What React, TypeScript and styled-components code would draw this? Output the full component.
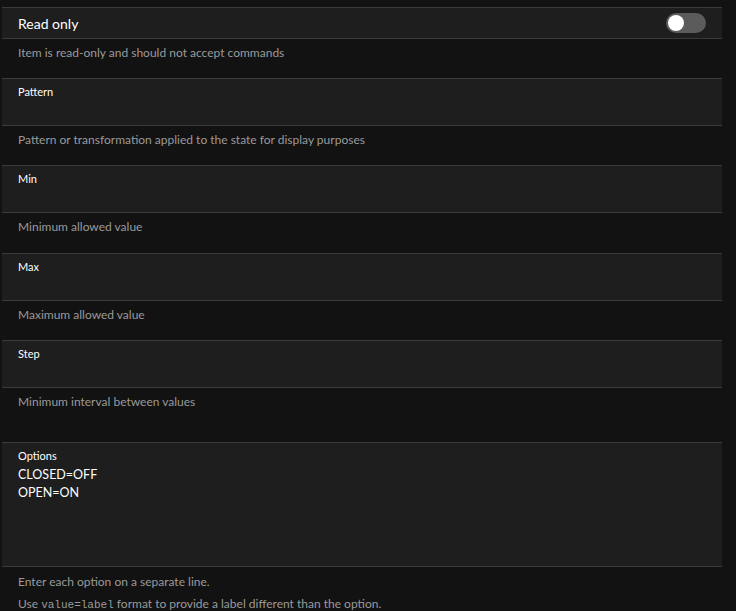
import { FC, useState } from 'react';
import styled, { createGlobalStyle } from 'styled-components';

const GlobalStyle = createGlobalStyle`
  html, body {
    margin: 0;
    padding: 0;
    background: #121212;
  }
  body {
    font-family: Lato, 'Open Sans', sans-serif;
    color: #ffffff;
  }
`;

interface IField {
  label: string;
  description: string;
  gap?: number;
}

const fields: IField[] = [
  { label: 'Pattern', description: 'Pattern or transformation applied to the state for display purposes' },
  { label: 'Min', description: 'Minimum allowed value', gap: 1 },
  { label: 'Max', description: 'Maximum allowed value' },
  { label: 'Step', description: 'Minimum interval between values', gap: 15 },
];

const App: FC = () => {
  const [readOnly, setReadOnly] = useState(false);

  return (
    <>
      <GlobalStyle />
      <Page>
        <Panel>
          <ToggleRow>
            <RowTitle>Read only</RowTitle>
            <Switch type="button" $on={readOnly} onClick={() => setReadOnly((v) => !v)}>
              <Knob $on={readOnly} />
            </Switch>
          </ToggleRow>
          <Hint>Item is read-only and should not accept commands</Hint>

          {fields.map((f) => (
            <div key={f.label}>
              <InputBlock>
                <FieldLabel>{f.label}</FieldLabel>
                <TextInput />
              </InputBlock>
              <Hint $extra={f.gap}>{f.description}</Hint>
            </div>
          ))}

          <InputBlock $tall>
            <FieldLabel>Options</FieldLabel>
            <OptionsArea defaultValue={'CLOSED=OFF\nOPEN=ON'} />
          </InputBlock>
          <HintList>
            <li>Enter each option on a separate line.</li>
            <li>
              Use <Code>value=label</Code> format to provide a label different than the option.
            </li>
          </HintList>
        </Panel>
      </Page>
    </>
  );
};

export default App;

const Page = styled.div`
  padding: 7px 14px 0 2px;
  height: 611px;
  box-sizing: border-box;
  overflow: hidden;
`;

const Panel = styled.div`
  display: flex;
  flex-direction: column;
  width: 720px;
`;

const ToggleRow = styled.div`
  display: flex;
  align-items: center;
  justify-content: space-between;
  height: 30px;
  padding: 0 16px;
  background: #1e1e1e;
  border-top: 1px solid #3a3a3a;
  border-bottom: 1px solid #3a3a3a;
`;

const RowTitle = styled.span`
  font-size: 14px;
  color: #ffffff;
`;

const Switch = styled.button<{ $on: boolean }>`
  position: relative;
  width: 40px;
  height: 20px;
  padding: 0;
  border: none;
  border-radius: 10px;
  background: ${(p) => (p.$on ? '#2196f3' : '#5b5b5b')};
  cursor: pointer;
`;

const Knob = styled.span<{ $on: boolean }>`
  position: absolute;
  top: 2px;
  left: ${(p) => (p.$on ? '22px' : '2px')};
  width: 16px;
  height: 16px;
  border-radius: 50%;
  background: #ffffff;
`;

const Hint = styled.div<{ $extra?: number }>`
  height: ${(p) => 39 + (p.$extra ?? 0)}px;
  box-sizing: border-box;
  padding: 5px 16px 0;
  font-size: 12px;
  line-height: 18px;
  color: #9a9a9a;
`;

const InputBlock = styled.div<{ $tall?: boolean }>`
  display: flex;
  flex-direction: column;
  padding: 5px 16px 0;
  background: #1e1e1e;
  border-top: 1px solid #3a3a3a;
  border-bottom: 1px solid #3a3a3a;
  height: ${(p) => (p.$tall ? '118px' : '41px')};
`;

const FieldLabel = styled.label`
  font-size: 11px;
  line-height: 15px;
  color: #ffffff;
`;

const TextInput = styled.input`
  background: transparent;
  border: none;
  outline: none;
  padding: 0;
  height: 20px;
  font-family: inherit;
  font-size: 12.5px;
  color: #ffffff;
`;

const OptionsArea = styled.textarea`
  flex: 1;
  background: transparent;
  border: none;
  outline: none;
  resize: none;
  padding: 3px 0 0;
  margin: 0 0 4px;
  font-family: inherit;
  font-size: 12.5px;
  line-height: 18px;
  color: #ffffff;
`;

const HintList = styled.ul`
  list-style: none;
  margin: 0;
  padding: 4px 16px 0;
  font-size: 12px;
  line-height: 22px;
  color: #9a9a9a;
`;

const Code = styled.code`
  font-family: 'Liberation Mono', 'DejaVu Sans Mono', monospace;
  font-size: 11px;
`;
